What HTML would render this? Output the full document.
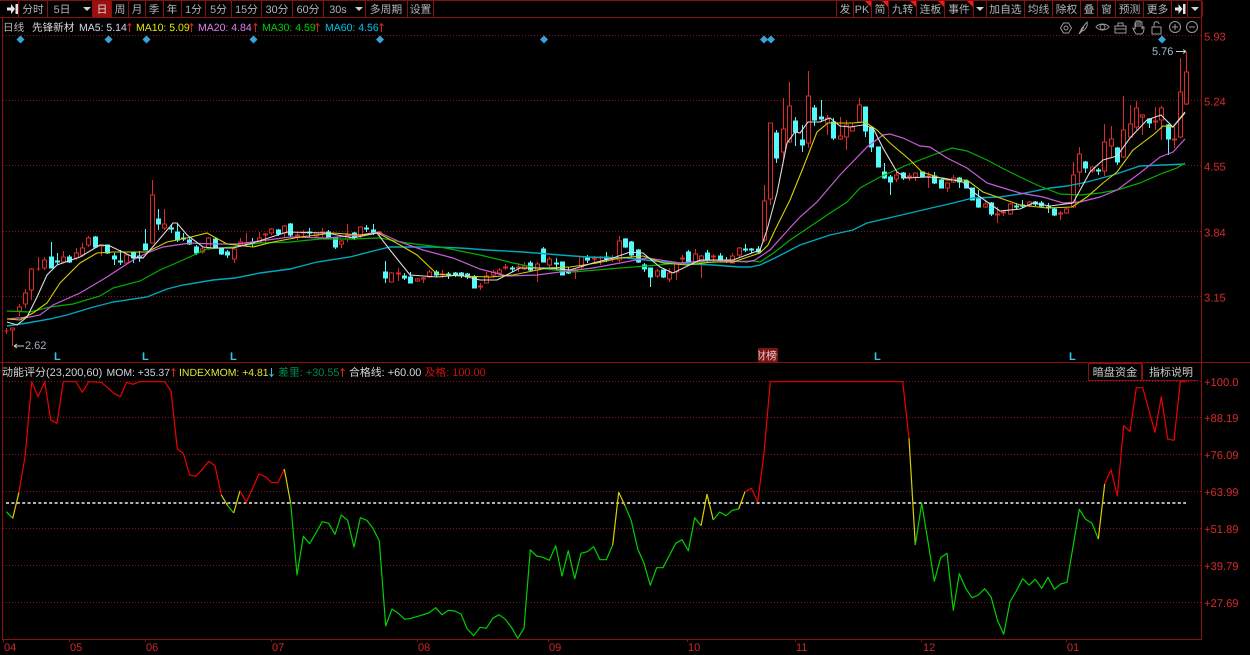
<!DOCTYPE html>
<html lang="zh"><head><meta charset="utf-8"><title>先锋新材 日线</title>
<style>
html,body{margin:0;padding:0;background:#000;width:1250px;height:655px;overflow:hidden}
svg{display:block;font-family:"Liberation Sans","Noto Sans CJK SC",sans-serif;text-rendering:geometricPrecision}
.b{fill:none;stroke:#8a1010;stroke-width:1}
.t{fill:#b4b4b4;font-size:10.8px;text-anchor:middle}
.a{fill:#d62a2a;font-size:11.2px}
.x{fill:#c82828;font-size:11px}
.s{font-size:10.5px}
.ic{fill:none;stroke:#9a9a9a;stroke-width:1}
</style></head><body>
<svg width="1250" height="655" viewBox="0 0 1250 655" xmlns="http://www.w3.org/2000/svg">
<defs><clipPath id="cb"><rect x="758" y="348" width="20" height="14"/></clipPath></defs>
<rect width="1250" height="655" fill="#000"/>
<!-- grid -->
<g stroke="#8a1414" stroke-width="1" stroke-dasharray="1 2">
<path d="M3 35.5H1201M3 100.5H1201M3 165.5H1201M3 231.5H1201M3 296.5H1201M3 381.5H1201M3 417.5H1201M3 454.5H1201M3 491.5H1201M3 528.5H1201M3 565.5H1201M3 602.5H1201"/>
</g>
<!-- frame -->
<path d="M2.5 18V639.5H1201.5V0M0 17.5H1201.5M0 362.5H1250M0 .5H1202" stroke="#8a1010" stroke-width="1" fill="none"/>
<path d="M3.5 639V642M69.5 639V642M145.5 639V642M271.5 639V642M417.5 639V642M548.5 639V642M687.5 639V642M795.5 639V642M921.5 639V642M1066.5 639V642" stroke="#8a1010"/>
<!-- toolbar -->
<rect x="93" y="1" width="18" height="16" fill="#9c1010"/>
<path class="b" d="M18.5 1V17M47.5 1V17M92.5 1V17M111.5 1V17M128.5 1V17M145.5 1V17M163.5 1V17M181.5 1V17M205.5 1V17M231.5 1V17M261.5 1V17M292.5 1V17M323.5 1V17M365.5 1V17M407.5 1V17M433.5 1V17M836.5 1V17M853.5 1V17M871.5 1V17M888.5 1V17M916.5 1V17M944.5 1V17M973.5 1V17M986.5 1V17M1024.5 1V17M1052.5 1V17M1080.5 1V17M1097.5 1V17M1115.5 1V17M1143.5 1V17M1171.5 1V17M1187.5 1V17M1202.5 1V17"/>
<path d="M7 7.5H11V4L15 9L11 14V10.5H7zM15.5 4H18V14H15.5z" fill="#e4e4e4"/>
<path d="M1175 7.5H1178.5V4L1182.5 9L1178.5 14V10.5H1175zM1183 4H1185.5V14H1183z" fill="#e4e4e4"/>
<g fill="#d0d0d0"><path d="M83 7h8l-4 4zM355 7h8l-4 4zM976 7h8l-4 4zM1191 7h8l-4 4z"/></g>
<g fill="#f01818"><path d="M865 1h6v6zM882 1h6v6zM910 1h6v6zM938 1h6v6zM967 1h6v6z"/></g>
<g class="t">
<text x="33" y="13">分时</text><text x="62" y="13">5日</text><text x="102" y="13" style="fill:#d8d8d8">日</text><text x="120" y="13">周</text><text x="137" y="13">月</text><text x="154" y="13">季</text><text x="172" y="13">年</text><text x="193.5" y="13">1分</text><text x="218.5" y="13">5分</text><text x="246.5" y="13">15分</text><text x="277" y="13">30分</text><text x="308" y="13">60分</text><text x="338" y="13">30s</text><text x="386" y="13">多周期</text><text x="420.5" y="13">设置</text>
<text x="845" y="13">发</text><text x="862" y="13">PK</text><text x="880" y="13">简</text><text x="902.5" y="13">九转</text><text x="930.5" y="13">连板</text><text x="959" y="13">事件</text><text x="1005.5" y="13">加自选</text><text x="1038.5" y="13">均线</text><text x="1066.5" y="13">除权</text><text x="1089" y="13">叠</text><text x="1106.5" y="13">窗</text><text x="1129.5" y="13">预测</text><text x="1157.5" y="13">更多</text>
</g>
<!-- title row -->
<g class="s">
<text x="3" y="31" fill="#b8b8b8" font-size="10.6">日线</text><text x="32" y="31" fill="#d8d8d8" font-size="10.6">先锋新材</text>
<text x="79" y="31" fill="#d4d8e8">MA5: 5.14</text>
<text x="136" y="31" fill="#e4e400">MA10: 5.09</text>
<text x="198" y="31" fill="#e080f0">MA20: 4.84</text>
<text x="262" y="31" fill="#00d000">MA30: 4.59</text>
<text x="325" y="31" fill="#00c4e8">MA60: 4.56</text>
</g>
<path fill="none" stroke="#d02020" d="M129.5 32V23.5M127.5 26L129.5 23.5L131.5 26M191.5 32V23.5M189.5 26L191.5 23.5L193.5 26M255.5 32V23.5M253.5 26L255.5 23.5L257.5 26M317.5 32V23.5M315.5 26L317.5 23.5L319.5 26M381.5 32V23.5M379.5 26L381.5 23.5L383.5 26"/>
<!-- icons -->
<g class="ic" transform="translate(0,-1)">
<path d="M1063.5 24l5 0 3 5-3 5h-5l-3-5z"/><circle cx="1066" cy="29" r="2"/>
<path d="M1079 35l3-6 5-6c1 3-1 8-5 9zM1079 35l5-7"/>
<path d="M1096 28c3-4 10-4 13 0-3 4-10 4-13 0z"/><circle cx="1102.5" cy="28" r="2.5"/>
<path d="M1115 27h11v7h-11zM1118 27v-3h5v3M1115 30h11"/>
<path d="M1136 35c-2-3-3-5-3-6l2 1v-6h1v4-6h2v6-6h2v6-5h2v7l1-2h1c0 4-1 7-3 7z"/>
<path d="M1152 28h9v7h-9zM1154 28v-3c0-3 5-3 5 0"/>
<circle cx="1175" cy="28" r="5.5"/><path d="M1172 28h6M1175 25v6"/>
<circle cx="1192" cy="28" r="5.5"/><path d="M1189 28h6"/>
</g>
<!-- diamonds -->
<g fill="#3ba2d8"><path d="M20.5 35.5l4 4-4 4-4-4zM108.5 35.5l4 4-4 4-4-4zM146.5 35.5l4 4-4 4-4-4zM253.5 35.5l4 4-4 4-4-4zM380 35.5l4 4-4 4-4-4zM544 35.5l4 4-4 4-4-4zM764 35.5l4 4-4 4-4-4zM771 35.5l4 4-4 4-4-4zM1162 35.5l4 4-4 4-4-4z"/></g>
<!-- red candles -->
<path fill="#000" stroke="#dc2a2a" stroke-width="1" d="M6.5 328V334M4.5 331h4M12.5 330V346M10.5 328h4v2h-4zM19.5 304V307m0 4V316M17.5 307h4v4h-4zM25.5 289V293m0 11V308M23.5 293h4v11h-4zM31.5 268V269m0 21V300M29.5 269h4v21h-4zM38.5 257V271M36.5 269h4M44.5 257V260m0 8V270M42.5 260h4v8h-4zM63.5 251V257m0 5V263M61.5 257h4v5h-4zM76.5 248V253m0 5V260M74.5 253h4v5h-4zM82.5 243V248m0 7V257M80.5 248h4v7h-4zM88.5 236V238m0 7V247M86.5 238h4v7h-4zM101.5 246V256M99.5 245h4v1h-4zM126.5 254V255m0 8V263M124.5 255h4v8h-4zM152.5 180V195m0 48V243M150.5 195h4v48h-4zM164.5 209V224m0 4V230M162.5 224h4v4h-4zM202.5 247V249m0 3V254M200.5 249h4v3h-4zM208.5 237V238m0 10V250M206.5 238h4v10h-4zM234.5 247V249m0 10V263M232.5 249h4v10h-4zM240.5 238V242m0 3V247M238.5 242h4v3h-4zM246.5 233V243m0 1V247M244.5 243h4v1h-4zM259.5 232V238m0 4V243M257.5 238h4v4h-4zM265.5 233V234m0 1V243M263.5 234h4v1h-4zM271.5 228V229m0 4V235M269.5 229h4v4h-4zM284.5 225V226m0 7V237M282.5 226h4v7h-4zM297.5 232V235m0 1V240M295.5 235h4v1h-4zM303.5 230V232m0 1V238M301.5 232h4v1h-4zM316.5 232V233m0 3V238M314.5 233h4v3h-4zM322.5 228V232m0 1V237M320.5 232h4v1h-4zM341.5 240V241m0 3V248M339.5 241h4v3h-4zM347.5 224V235m0 4V242M345.5 235h4v4h-4zM360.5 236V238M358.5 227h4v9h-4zM379.5 231V232m0 1V236M377.5 232h4v1h-4zM391.5 272V273M389.5 273h4v9h-4zM398.5 268V273m0 1V281M396.5 273h4v1h-4zM417.5 278V279m0 2V282M415.5 279h4v2h-4zM423.5 277V278m0 1V283M421.5 278h4v1h-4zM429.5 270V272m0 5V278M427.5 272h4v5h-4zM442.5 270V274m0 1V278M440.5 274h4v1h-4zM480.5 283V286m0 1V290M478.5 286h4v1h-4zM486.5 272V276M484.5 276h4v7h-4zM493.5 270V272m0 3V278M491.5 272h4v3h-4zM499.5 268V270m0 3V275M497.5 270h4v3h-4zM505.5 264V267m0 1V270M503.5 267h4v1h-4zM518.5 263V267m0 1V272M516.5 267h4v1h-4zM524.5 262V266m0 3V270M522.5 266h4v3h-4zM537.5 262V264m0 6V282M535.5 264h4v6h-4zM549.5 257V259m0 6V268M547.5 259h4v6h-4zM575.5 269V270m0 1V279M573.5 270h4v1h-4zM581.5 267V270M579.5 257h4v10h-4zM594.5 256V258m0 1V263M592.5 258h4v1h-4zM600.5 256V257m0 1V265M598.5 257h4v1h-4zM612.5 255V258m0 1V262M610.5 258h4v1h-4zM619.5 236V241m0 19V262M617.5 241h4v19h-4zM657.5 269V271m0 5V278M655.5 271h4v5h-4zM669.5 268V273m0 6V282M667.5 273h4v6h-4zM676.5 262V263m0 9V280M674.5 263h4v9h-4zM682.5 255V258m0 1V262M680.5 258h4v1h-4zM695.5 249V254m0 8V263M693.5 254h4v8h-4zM701.5 255V256m0 6V278M699.5 256h4v6h-4zM713.5 254V256m0 1V263M711.5 256h4v1h-4zM732.5 253V256M730.5 256h4v7h-4zM739.5 247V248m0 7V257M737.5 248h4v7h-4zM764.5 185V201m0 39V242M762.5 201h4v39h-4zM770.5 199V205M768.5 123h4v76h-4zM783.5 98V129m0 23V159M781.5 129h4v23h-4zM789.5 82V106m0 36V143M787.5 106h4v36h-4zM808.5 71V96m0 47V148M806.5 96h4v47h-4zM827.5 115V118m0 5V135M825.5 118h4v5h-4zM840.5 117V136m0 3V140M838.5 136h4v3h-4zM846.5 120V125m0 12V150M844.5 125h4v12h-4zM852.5 123V127M850.5 127h4v4h-4zM859.5 98V105m0 17V123M857.5 105h4v17h-4zM896.5 172V175m0 4V182M894.5 175h4v4h-4zM909.5 173V176m0 1V181M907.5 176h4v1h-4zM915.5 177V181M913.5 173h4v4h-4zM928.5 172V176m0 1V188M926.5 176h4v1h-4zM947.5 188V192M945.5 183h4v5h-4zM953.5 175V178m0 4V183M951.5 178h4v4h-4zM985.5 200V204m0 3V208M983.5 204h4v3h-4zM997.5 207V214m0 1V223M995.5 214h4v1h-4zM1003.5 210V212m0 1V216M1001.5 212h4v1h-4zM1010.5 203V204m0 10V215M1008.5 204h4v10h-4zM1029.5 201V202m0 3V207M1027.5 202h4v3h-4zM1060.5 211V213m0 1V220M1058.5 213h4v1h-4zM1066.5 208V209m0 4V214M1064.5 209h4v4h-4zM1073.5 162V175m0 32V208M1071.5 175h4v32h-4zM1079.5 147V154m0 18V187M1077.5 154h4v18h-4zM1092.5 171V173M1090.5 167h4v4h-4zM1104.5 124V142m0 29V176M1102.5 142h4v29h-4zM1111.5 126V139m0 7V157M1109.5 139h4v7h-4zM1123.5 96V130m0 27V158M1121.5 130h4v27h-4zM1130.5 105V124m0 13V138M1128.5 124h4v13h-4zM1136.5 101V108m0 19V130M1134.5 108h4v19h-4zM1142.5 114V115m0 2V135M1140.5 115h4v2h-4zM1155.5 107V121m0 1V130M1153.5 121h4v1h-4zM1161.5 106V108m0 12V140M1159.5 108h4v12h-4zM1174.5 127V139m0 1V148M1172.5 139h4v1h-4zM1180.5 58V92m0 45V138M1178.5 92h4v45h-4zM1186.5 52V72m0 32V105M1184.5 72h4v32h-4z"/>
<!-- cyan candles -->
<path fill="#54fafa" stroke="#54fafa" stroke-width="1" d="M51.5 242V268M49.5 257h4v11h-4zM57.5 253V265M55.5 261h4v1h-4zM69.5 255V263M67.5 257h4v5h-4zM95.5 236V247M93.5 237h4v10h-4zM107.5 245V254M105.5 245h4v8h-4zM114.5 253V265M112.5 256h4v3h-4zM120.5 250V265M118.5 261h4v1h-4zM133.5 252V263M131.5 253h4v5h-4zM139.5 251V262M137.5 256h4v2h-4zM145.5 229V250M143.5 244h4v6h-4zM158.5 209V230M156.5 219h4v5h-4zM171.5 224V233M169.5 228h4v1h-4zM177.5 223V242M175.5 232h4v8h-4zM183.5 233V241M181.5 238h4v1h-4zM189.5 238V245M187.5 240h4v4h-4zM196.5 245V255M194.5 247h4v6h-4zM215.5 238V248M213.5 239h4v8h-4zM221.5 248V255M219.5 249h4v5h-4zM227.5 250V258M225.5 252h4v3h-4zM252.5 238V247M250.5 243h4v1h-4zM278.5 229V236M276.5 230h4v4h-4zM290.5 223V237M288.5 224h4v11h-4zM309.5 228V237M307.5 232h4v1h-4zM328.5 230V238M326.5 232h4v5h-4zM335.5 237V249M333.5 238h4v9h-4zM354.5 232V240M352.5 233h4v4h-4zM366.5 225V232M364.5 228h4v1h-4zM373.5 224V235M371.5 230h4v2h-4zM385.5 261V283M383.5 272h4v6h-4zM404.5 273V280M402.5 276h4v2h-4zM410.5 272V283M408.5 277h4v6h-4zM436.5 270V277M434.5 272h4v3h-4zM448.5 272V279M446.5 274h4v1h-4zM455.5 272V277M453.5 273h4v2h-4zM461.5 272V278M459.5 273h4v2h-4zM467.5 273V279M465.5 274h4v3h-4zM474.5 275V288M472.5 277h4v11h-4zM512.5 266V272M510.5 268h4v1h-4zM530.5 261V272M528.5 263h4v7h-4zM543.5 247V262M541.5 249h4v13h-4zM556.5 258V270M554.5 263h4v1h-4zM562.5 262V275M560.5 262h4v13h-4zM568.5 267V274M566.5 271h4v2h-4zM587.5 255V263M585.5 257h4v3h-4zM606.5 252V262M604.5 257h4v2h-4zM625.5 238V248M623.5 239h4v8h-4zM631.5 241V257M629.5 242h4v13h-4zM638.5 249V263M636.5 250h4v12h-4zM644.5 263V272M642.5 265h4v4h-4zM650.5 268V287M648.5 268h4v9h-4zM663.5 270V278M661.5 270h4v7h-4zM688.5 250V263M686.5 252h4v10h-4zM707.5 250V262M705.5 253h4v6h-4zM720.5 253V262M718.5 256h4v4h-4zM726.5 257V263M724.5 261h4v1h-4zM745.5 244V252M743.5 249h4v1h-4zM751.5 248V253M749.5 249h4v1h-4zM758.5 246V253M756.5 249h4v3h-4zM776.5 130V163M774.5 133h4v25h-4zM795.5 117V146M793.5 121h4v11h-4zM802.5 125V152M800.5 140h4v5h-4zM814.5 105V126M812.5 108h4v12h-4zM821.5 100V122M819.5 117h4v2h-4zM833.5 118V140M831.5 122h4v16h-4zM865.5 107V137M863.5 107h4v24h-4zM871.5 128V152M869.5 128h4v19h-4zM878.5 147V167M876.5 147h4v20h-4zM884.5 163V179M882.5 172h4v6h-4zM890.5 175V195M888.5 177h4v5h-4zM903.5 172V180M901.5 173h4v5h-4zM922.5 172V177M920.5 172h4v5h-4zM934.5 172V184M932.5 176h4v7h-4zM941.5 179V188M939.5 180h4v8h-4zM959.5 177V188M957.5 178h4v4h-4zM966.5 180V188M964.5 181h4v7h-4zM972.5 188V200M970.5 188h4v12h-4zM978.5 190V208M976.5 198h4v9h-4zM991.5 202V216M989.5 203h4v11h-4zM1016.5 203V210M1014.5 206h4v1h-4zM1022.5 200V208M1020.5 205h4v1h-4zM1035.5 201V206M1033.5 202h4v2h-4zM1041.5 201V207M1039.5 203h4v3h-4zM1048.5 203V213M1046.5 207h4v1h-4zM1054.5 208V216M1052.5 209h4v6h-4zM1085.5 161V173M1083.5 162h4v6h-4zM1098.5 168V175M1096.5 170h4v1h-4zM1117.5 147V165M1115.5 148h4v14h-4zM1149.5 118V128M1147.5 119h4v4h-4zM1168.5 124V155M1166.5 125h4v14h-4z"/>
<!-- MA60 -->
<polyline fill="none" stroke="#00a8c0" stroke-width="1.4" points="7,326 27,323 50,319 67,315 90,308 113,302 147,297 167,289 183,285 213,280 235,278 260,273 290,269 317,262 350,257 377,250 390,247 433,247 460,248 487,250 523,252 560,255 587,257 627,258 673,263 713,265 740,267 750,267 760,265 775,258 800,245 830,235 853,230 867,223 893,217 927,209 953,203 973,198 1000,197 1020,194 1050,188 1067,186 1087,182 1113,175 1140,166 1163,165 1185,164"/>
<!-- MA30 -->
<polyline fill="none" stroke="#00b000" stroke-width="1.2" points="7,311 30,312 50,307 73,304 100,296 113,288 140,281 160,270 183,260 207,249 233,247 260,243 290,242 320,239 353,239 377,238 380,238 407,243 440,247 480,255 513,263 537,268 573,272 620,268 647,266 680,263 713,262 753,261 760,262 775,252 790,240 805,230 827,215 847,202 860,188 880,177 907,165 933,155 952,148 967,151 987,160 1000,167 1020,177 1037,185 1060,194 1080,195 1100,193 1117,190 1140,183 1163,173 1177,168 1185,163"/>
<!-- MA20 -->
<polyline fill="none" stroke="#c85cd8" stroke-width="1.2" points="7,319 30,317 40,315 53,305 80,293 107,277 133,260 147,253 163,247 190,243 213,244 237,244 260,241 290,237 327,238 360,235 378,232 400,242 423,250 453,258 480,269 507,276 537,275 560,272 593,268 620,263 647,258 680,263 713,260 747,262 755,260 770,250 788,230 800,217 817,202 840,175 867,147 883,135 890,134 903,138 920,146 930,147 947,158 967,168 987,183 1000,187 1020,193 1043,197 1063,203 1080,202 1100,197 1117,190 1140,173 1160,157 1173,152 1185,139"/>
<!-- MA10 -->
<polyline fill="none" stroke="#d8d000" stroke-width="1.1" points="7,319 20,320 33,313 47,303 60,283 80,263 97,253 113,252 147,252 167,242 187,238 207,233 227,244 253,247 273,242 300,237 333,233 360,235 378,233 400,245 417,255 437,274 460,276 490,277 513,275 547,268 570,267 597,263 620,258 643,256 663,263 687,265 713,262 733,262 760,253 768,245 775,230 790,200 803,168 817,132 828,123 853,123 865,122 877,130 890,143 910,160 922,172 947,180 967,180 983,192 1000,198 1020,205 1047,208 1072,207 1087,197 1103,183 1117,172 1133,150 1153,135 1163,126 1173,127 1185,113"/>
<!-- MA5 -->
<polyline fill="none" stroke="#dcdcdc" stroke-width="1.1" points="7,322 17,325 27,317 37,297 47,275 57,265 80,257 100,245 110,246 133,257 143,258 157,242 173,223 177,223 187,235 203,247 213,248 233,248 253,243 287,232 327,233 353,238 377,233 390,250 410,275 437,277 460,275 480,280 497,280 520,268 547,268 570,270 593,263 613,258 630,252 643,253 660,267 673,273 700,260 733,260 760,250 767,230 777,193 787,143 795,132 800,133 808,122 820,122 830,118 840,126 850,127 863,125 873,128 883,148 897,172 907,178 927,177 943,178 963,182 973,192 1000,211 1020,209 1033,203 1050,206 1073,203 1090,172 1103,160 1117,156 1130,138 1147,120 1161,115 1173,127 1185,112"/>
<!-- annotations -->
<path d="M14 346H24M14 346l3-2M14 346l3 2" stroke="#d0d0d0" fill="none"/>
<text x="25" y="349" fill="#a8b0bc" font-size="11">2.62</text>
<path d="M1176 51.5H1186M1186 51.5l-3-2M1186 51.5l-3 2" stroke="#d0d0d0" fill="none"/>
<text x="1152" y="55" fill="#a8b8c8" font-size="11">5.76</text>
<g fill="#30c8e8" font-size="11" font-weight="bold"><text x="54" y="360">L</text><text x="142" y="360">L</text><text x="230" y="360">L</text><text x="874" y="360">L</text><text x="1069" y="360">L</text></g>
<rect x="758" y="348" width="20" height="14" fill="#7a1414"/>
<text x="755" y="359.5" fill="#e8c0c0" font-size="11" clip-path="url(#cb)">财榜</text>
<!-- sub title -->
<g class="s">
<text x="2" y="376" fill="#d0d0d0" font-size="11">动能评分(23,200,60)</text>
<text x="106.5" y="376" fill="#d0d4e0" font-size="10.45">MOM: +35.37</text>
<text x="179" y="376" fill="#e4e430" font-size="10.45">INDEXMOM: +4.81</text>
<text x="278" y="376" fill="#00884c" font-size="10.9">差里: +30.55</text>
<text x="349" y="376" fill="#d8d8d8" font-size="10.9">合格线: +60.00</text>
<text x="424.5" y="376" fill="#cc1010" font-size="10.9">及格: 100.00</text>
</g>
<path fill="none" stroke="#d02020" d="M173.5 377V368.5M171.5 371L173.5 368.5L175.5 371M342.5 377V368.5M340.5 371L342.5 368.5L344.5 371"/>
<path fill="none" stroke="#30c0e8" d="M271.5 368V376.5M269.5 374L271.5 376.5L273.5 374"/>
<!-- sub buttons -->
<rect x="1088.5" y="363.5" width="53" height="17" class="b"/>
<path class="b" d="M1142.5 363.5V380.5H1197.5"/>
<text x="1115" y="376" class="t" style="fill:#c8c8c8;font-size:11.2px">暗盘资金</text>
<text x="1171" y="376" class="t" style="fill:#c8c8c8;font-size:11px">指标说明</text>
<!-- white 60 line -->
<path d="M6 503H1186" stroke="#f0f0f0" stroke-width="1.4" stroke-dasharray="3 2.4" fill="none"/>
<!-- indicator -->
<g fill="none" stroke-width="1.2" stroke-linejoin="round">
<polyline stroke="#00d000" points="6.3,511.7 12.7,518.3"/>
<polyline stroke="#d8d000" points="12.7,518.3 19,492.3"/>
<polyline stroke="#ee0000" points="19,492.3 25.3,455 31.7,381.7 38,396.7 44.7,381.7 50.7,420 57,423.3 63.3,381.7 76,381.7 82.3,392.3 88.7,381.7 101.3,382.3 114,393.3 120.3,396.7 126.7,382.3 133,384.3 139.3,381.7 164.7,381.7 171,391 177.3,449 183.3,453.3 189.7,475 195.7,476.3 202.3,469.3 208.7,461.3 215,465.7 221.3,495"/>
<polyline stroke="#d8d000" points="221.3,495 227.7,505.7"/>
<polyline stroke="#00d000" points="227.7,505.7 233.7,513"/>
<polyline stroke="#d8d000" points="233.7,513 240,490.7"/>
<polyline stroke="#ee0000" points="240,490.7 246.3,502.3 259,474 265.3,476.7 271.7,482.7 278,482.7 284.3,469"/>
<polyline stroke="#d8d000" points="284.3,469 290.7,503.3"/>
<polyline stroke="#00d000" points="290.7,503.3 297,575 303.3,536.3 309.7,543.7 322.3,521.7 328.7,523.3 335,534.3 341.3,515 347.7,520.3 354,547 360.3,517.7 366.7,520.3 373,528.3 379.3,541 385.7,626 392,609 398.3,613.3 404.7,619.3 411,618.3 420,615.7 428.7,613 435.7,607.7 442,614.7 448.3,610.3 454.7,611 461,614 467.3,629 473.7,635.7 480,627.3 486.3,628.3 492.7,618.3 499,614.7 505.3,619.3 511.7,627.7 517.7,638.3 524,628.3 530.3,550 536.7,556 543,557.3 549.3,560.3 555.7,545.7 562,576 568.3,550.7 574.7,578.7 581,553.3 587.3,551.7 593.7,546.7 600,559.7 606.3,559.7 612.7,545"/>
<polyline stroke="#d8d000" points="612.7,545 618.7,492.3 625,505.7"/>
<polyline stroke="#00d000" points="625,505.7 631.3,520.7 637.7,549 644,563.3 650.3,585.3 656.7,567.7 663,567.7 675.7,543.3 682,539.7 688.3,550.7 694.7,517.7 701,525.7"/>
<polyline stroke="#d8d000" points="701,525.7 707,494.3 713.3,520"/>
<polyline stroke="#00d000" points="713.3,520 719.7,512 726,515.7 732.3,510.3 738.7,509"/>
<polyline stroke="#d8d000" points="738.7,509 745,491.7"/>
<polyline stroke="#ee0000" points="745,491.7 751.3,488.3 757.7,501.7 764,453.3 770.3,381.7 902.7,381.7 909,438.3"/>
<polyline stroke="#d8d000" points="909,438.3 915.3,545"/>
<polyline stroke="#00d000" points="915.3,545 921.7,503.3 928,541.7 934.3,581.3 940.7,557.7 947,553.3 953.3,610.3 959.3,573.7 965.7,588.3 972,597.7 978.3,595 984.7,588.7 991,596.7 997.3,620 1003.7,634.3 1010,601.7 1016.3,591 1022.7,578.7 1029,585 1035.3,579.3 1041.7,588.3 1048,577.3 1054.3,589.3 1060.7,584 1067,582.3 1073.3,545 1079.3,509.3 1085.7,519.3 1092,523.3 1098.3,539"/>
<polyline stroke="#d8d000" points="1098.3,539 1104.7,484"/>
<polyline stroke="#ee0000" points="1104.7,484 1111,469.7 1117.3,496 1123.7,425.7 1130,431.7 1136.3,387.7 1142.7,387.7 1155,432.3 1161.3,396.7 1167.7,439 1174,440.3 1180.3,381.7 1186.7,381.7"/>
</g>
<!-- right axis -->
<g class="a">
<text x="1204" y="40.5">5.93</text><text x="1204" y="105.5">5.24</text><text x="1204" y="170.5">4.55</text><text x="1204" y="236.5">3.84</text><text x="1204" y="301.5">3.15</text>
<text x="1204" y="386">+100.0</text><text x="1204" y="422">+88.19</text><text x="1204" y="459">+76.09</text><text x="1204" y="496">+63.99</text><text x="1204" y="533">+51.89</text><text x="1204" y="570">+39.79</text><text x="1204" y="607">+27.69</text>
</g>
<!-- x axis -->
<g class="x">
<text x="4" y="651">04</text><text x="70" y="651">05</text><text x="146" y="651">06</text><text x="272" y="651">07</text><text x="418" y="651">08</text><text x="549" y="651">09</text><text x="688" y="651">10</text><text x="796" y="651">11</text><text x="923" y="651">12</text><text x="1067" y="651">01</text>
</g>
</svg>
</body></html>
